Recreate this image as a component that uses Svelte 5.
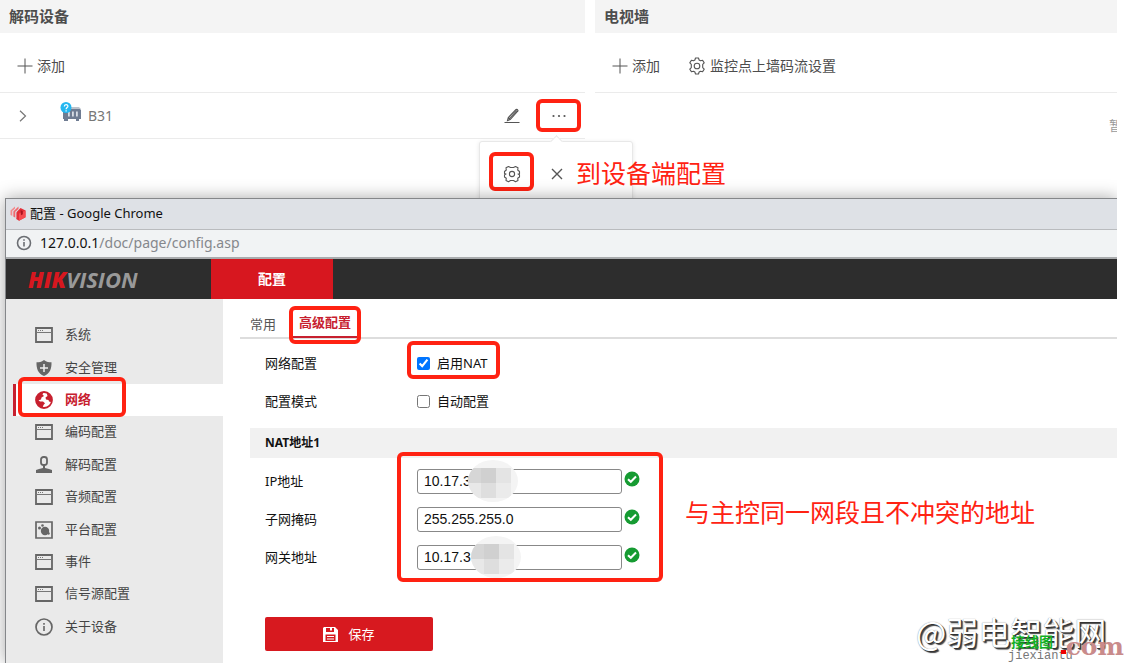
<script>
  const menu = [
    { label: '系统', icon: 'window' },
    { label: '安全管理', icon: 'shield' },
    { label: '网络', icon: 'globe', active: true },
    { label: '编码配置', icon: 'window' },
    { label: '解码配置', icon: 'decoder' },
    { label: '音频配置', icon: 'window' },
    { label: '平台配置', icon: 'platform' },
    { label: '事件', icon: 'window' },
    { label: '信号源配置', icon: 'window' },
    { label: '关于设备', icon: 'info' }
  ];
  const fields = [
    { id: 'ip', label: 'IP地址', value: '10.17.3', mask: 'first' },
    { id: 'netmask', label: '子网掩码', value: '255.255.255.0' },
    { id: 'gateway', label: '网关地址', value: '10.17.3', mask: 'second' }
  ];
  let nat = $state(true);
  let auto = $state(false);
</script>

{#snippet plus()}
  <svg width="16" height="16" viewBox="0 0 16 16" fill="none" stroke="#555"><path d="M8 .5v15M.5 8h15" /></svg>
{/snippet}

{#snippet gear()}
  <svg width="18" height="18" viewBox="0 0 18 18" fill="none" stroke="#555" stroke-width="1.1" stroke-linejoin="round">
    <path d="M7.500 1h3l.6 2 1.400.8 2.100-.6 1.600 2.700-1.500 1.500v3.200l1.500 1.500-1.600 2.700-2.100-.6-1.400.8-.6 2h-3l-.6-2-1.400-.8-2.100.6-1.600-2.700 1.500-1.500V7.400L1.800 5.900l1.600-2.700 2.100.6L6.900 3z" />
    <circle cx="9" cy="9" r="2.800" />
  </svg>
{/snippet}

<div class="page">
  <div class="panels">
    <section>
      <h2>解码设备</h2>
      <div class="toolbar"><button class="tool">{@render plus()}添加</button></div>
      <div class="device">
        <button class="expand" aria-label="B31">
          <svg width="8" height="12" viewBox="0 0 8 12" fill="none" stroke="#777" stroke-width="1.200"><path d="M1 .8 6.500 6 1 11.200" /></svg>
        </button>
        <svg class="unit" width="22" height="20" viewBox="0 0 22 20">
          <path d="M8 7 11 5h8l2 2z" fill="#bcc3cc" />
          <path d="M3 8h4l2-1h11l1 1v9h-2v2h-3v-2H8v2H4v-2H3z" fill="#6f7c92" />
          <path d="M8 9.500h1.800v5H8zM12 9.500h1.800v5H12zM16 9.500h1.800v5H16z" fill="#d8dde5" />
          <circle cx="6" cy="5.500" r="5.500" fill="#25b7f0" />
          <path d="M4.300 4.400C4.300 2 7.900 2 7.900 4.200 7.900 5.500 6.100 5.600 6.100 7.200M6.100 8.200v1.200" fill="none" stroke="#fff" stroke-width="1.200" />
        </svg>
        <span class="name">B31</span>
        <button class="icon" aria-label="编辑">
          <svg width="16" height="16" viewBox="0 0 16 16" fill="none" stroke="#555" stroke-width="1.100"><path d="M3.500 12.500 4.300 9.600 12 1.500Q13.200 1 14 2.400 14 3 13.500 3.500L6.200 11.500zM4.500 9.800l1.700 1.700M5.500 10.500 12.800 2.500M.5 14.500h15" /></svg>
        </button>
        <div class="more marked">
          <button class="icon" aria-label="更多">
            <svg width="14" height="4" viewBox="0 0 14 4" fill="#555"><circle cx="1.500" cy="2" r="1.100" /><circle cx="7" cy="2" r="1.100" /><circle cx="12.500" cy="2" r="1.100" /></svg>
          </button>
          <div class="popover">
            <div class="setting marked">
              <button class="icon" aria-label="配置">
                <svg width="18" height="18" viewBox="0 0 18 18" fill="none" stroke="#555" stroke-width="1.100" stroke-linejoin="round">
                  <path d="M5.500 1.500 7.500 2.500h3l2-1 2.500 1.300-.3 2.200 1.800 1.500v2.200L15 9l1.500.8v2.200l-1.800 1.300.3 2.200-2.500 1.200-2-1.200h-3l-2 1.200L3 15.500l.3-2.200L1.500 12V9.800L3 9l-1.500-.5V6.500L3.300 5 3 2.800z" />
                  <circle cx="9" cy="9" r="2.600" />
                </svg>
              </button>
            </div>
            <button class="icon" aria-label="删除">
              <svg width="12" height="12" viewBox="0 0 12 12" fill="none" stroke="#555" stroke-width="1.400"><path d="m1 1 10 10M11 1 1 11" /></svg>
            </button>
            <p class="note">到设备端配置</p>
          </div>
        </div>
      </div>
    </section>

    <section>
      <h2>电视墙</h2>
      <div class="toolbar">
        <button class="tool">{@render plus()}添加</button>
        <button class="tool">{@render gear()}监控点上墙码流设置</button>
      </div>
      <div class="empty"><span>暂</span></div>
    </section>
  </div>

  <div class="browser">
    <div class="titlebar">
      <svg width="16" height="16" viewBox="0 0 16 16">
        <path d="M.5 5.500 5 1.500v2L2.500 6v5L.5 10z" fill="#f4898c" />
        <path d="M3.200 6.500 8.500 1.500v2.300L5.500 6.800v6L3.200 11.500z" fill="#f0686d" />
        <path d="M6.200 7.500 10.500 3 15.500 5.500v6.800L9 15.800 6.200 14z" fill="#e42d36" />
        <path d="M9 8.500 15.500 5.500v6.800L9 15.800z" fill="#f64b50" /><path d="M10.500 5 12.800 6.300v3l-1.800 1z" fill="#a9131e" />
        <path d="M2.800 5.500v6M5.900 6.500v7" stroke="#dee1e6" stroke-width=".7" />
      </svg>
      <span>配置 - Google Chrome</span>
    </div>
    <div class="address">
      <svg width="16" height="16" viewBox="0 0 16 16" fill="none" stroke="#6b6e73" stroke-width="1.600"><circle cx="8" cy="8" r="6.500" /><path d="M8 7v4.500M8 4.300v1.500" /></svg>
      <span>127.0.0.1<i>/doc/page/config.asp</i></span>
    </div>
    <header>
      <div class="logo"><b>HIK</b>VISION</div>
      <a class="nav" href="#config">配置</a>
    </header>

    <div class="body">
      <nav>
        {#each menu as item}
          <a href="#{item.icon}" class:active={item.active}>
            <svg width="18" height="18" viewBox="0 0 18 18">
              {#if item.icon === 'window'}
                <path d="M1 2h16v14H1z" fill="none" stroke="#666" stroke-width="1.800" />
                <path d="M1 6.500h16" stroke="#777" />
                <path d="M3 4.500h6" stroke="#777" stroke-dasharray="1 1" />
              {:else if item.icon === 'shield'}
                <path d="M9 1c2.500 2 5 2.300 7.500 2.300C16.700 10 15 14.500 9 17 3 14.500 1.300 10 1.500 3.300 4 3.300 6.500 3 9 1z" fill="#666" />
                <path d="M9 5v8M5 9h8" stroke="#eee" stroke-width="1.500" />
              {:else if item.icon === 'globe'}
                <circle cx="9" cy="9" r="8" fill="#fff" stroke="#c7202f" stroke-width="1.800" />
                <path d="M1.200 9C1.200 4.500 4.500 1.300 8.500 1.200L7.500 3.500 9 5 6.500 6.500 6 8.500 3.500 9.200 5 10.500H8L10 12.200 8.500 14 7.500 17C4 16.500 1.200 13 1.200 9zM11.500 1.500 15 4 17 8.500 16 11 14 10.500 13.500 9 11 8.500 10.500 6.500 12.500 5z" fill="#c7202f" />
              {:else if item.icon === 'decoder'}
                <rect x="6" y="1" width="6" height="8" rx="2.500" fill="none" stroke="#666" stroke-width="1.800" />
                <path d="M8 9h2v3l4 1H4l4-1zM1 14l3-1h10l3 1v3H1z" fill="#666" />
              {:else if item.icon === 'platform'}
                <path d="M1 1h16v16H1z" fill="none" stroke="#666" stroke-width="1.700" />
                <circle cx="10" cy="10" r="4.200" fill="#666" /><circle cx="4.500" cy="7" r="1.500" fill="#666" /><circle cx="7.500" cy="4.500" r="1.300" fill="#666" /><path d="m11 12 3 2 1-2-3-2z" fill="#666" />
              {:else}
                <circle cx="9" cy="9" r="8" fill="none" stroke="#666" stroke-width="1.700" />
                <path d="M9 8v5M9 5v1.700" stroke="#666" stroke-width="1.600" />
              {/if}
            </svg>
            <span>{item.label}</span>
            {#if item.active}<span class="outline"></span>{/if}
          </a>
        {/each}
      </nav>

      <main>
        <div class="tabs">
          <a href="#common">常用</a>
          <a href="#advanced" class="current">高级配置</a>
        </div>
        <div class="form">
          <div class="row">
            <span>网络配置</span>
            <label class="check nat"><input type="checkbox" bind:checked={nat} />启用NAT</label>
          </div>
          <div class="row">
            <span>配置模式</span>
            <label class="check"><input type="checkbox" bind:checked={auto} />自动配置</label>
          </div>
          <h3>NAT地址1</h3>
          <div class="group">
            {#each fields as f}
              <div class="row">
                <label for={f.id}>{f.label}</label>
                <div class="field">
                  <input id={f.id} type="text" value={f.value} />
                  {#if f.mask}
                    <svg class="mask {f.mask}" width="50" height="42" viewBox="0 0 50 42">
                      <defs><clipPath id="c-{f.id}"><ellipse cx="25" cy="21" rx="25" ry="21" /></clipPath></defs>
                      <g clip-path="url(#c-{f.id})">
                        <path d="M0 0h50v42H0z" fill="#f4f4f4" />
                        <path d="M0 8h13v15H0z" fill="#d6d6d6" /><path d="M13 8h15v15H13z" fill="#d0d0d0" /><path d="M28 8h15v15H28z" fill="#e4e4e4" />
                        <path d="M0 23h13v15H0z" fill="#e8e8e8" /><path d="M13 23h15v15H13z" fill="#dedede" /><path d="M28 23h15v15H28z" fill="#ebebeb" />
                      </g>
                    </svg>
                  {/if}
                  <svg width="16" height="16" viewBox="0 0 16 16"><circle cx="8" cy="8" r="7.500" fill="#169b32" /><path d="m4 8.200 2.800 2.600L12 5.500" fill="none" stroke="#fff" stroke-width="2" /></svg>
                </div>
              </div>
            {/each}
            <p class="note">与主控同一网段且不冲突的地址</p>
          </div>
          <button class="save">
            <svg width="15" height="15" viewBox="0 0 15 15"><path fill-rule="evenodd" d="M1 0h11l3 3v12H0V1zM3 1v4h8V1H9v2.500H7V1zM2.500 7.500V14h10V7.500zM4 9h7v1H4zM4 11.500h7v1H4z" fill="#fff" /></svg>
            保存
          </button>
        </div>
      </main>
    </div>
  </div>

  <div class="watermark">
    <span class="handle">@弱电智能网</span>
    <span class="site"><b>接线图</b><small>jiexiantu</small></span>
    <span class="com"><i></i>com</span>
  </div>
</div>

<style>
  :global(body) { background: #fff; }
  .page {
    --mark: #ff2212;
    position: relative;
    box-sizing: border-box;
    display: flex;
    flex-direction: column;
    min-height: 100vh;
    padding-right: 7px;
    overflow: hidden;
    color: #4d4d4d;
    font: 14px/20px "Noto Sans", "Noto Sans CJK SC", sans-serif;
  }
  button { padding: 0; border: 0; background: none; font: inherit; color: inherit; display: flex; align-items: center; justify-content: center; }
  a { color: inherit; text-decoration: none; }
  svg { flex: none; display: block; }
  p, h2, h3 { margin: 0; }

  .panels { display: grid; grid-template-columns: 585fr 522fr; gap: 10px; padding-bottom: 59px; }
  h2 { padding: 6px 10px 7px 9px; background: #f4f4f4; font-size: 15px; line-height: 20px; font-weight: 700; }
  .toolbar { display: flex; gap: 28px; padding: 23px 17px 16px; border-bottom: 1px solid #ebebeb; }
  .tool { gap: 4px; }
  .device { display: flex; align-items: center; height: 45px; padding: 0 4px 0 19px; border-bottom: 1px solid #ebebeb; }
  .expand { width: 8px; height: 20px; }
  .unit { margin: 0 6px 8px 33px; }
  .name { flex: 1; color: #777; }
  .more { position: relative; margin-left: 16px; width: 45px; height: 33px; display: grid; place-content: center; }
  .marked::after, .outline, .current::after, .nat::after, .group::after {
    content: "";
    position: absolute;
    box-sizing: border-box;
    inset: 0;
    border: 4px solid var(--mark);
    border-radius: 6px;
    pointer-events: none;
  }
  .popover {
    position: absolute;
    top: 42px;
    left: -57px;
    box-sizing: border-box;
    display: flex;
    align-items: center;
    width: 154px;
    height: 66px;
    padding: 0 0 5px 9px;
    background: #fff;
    border: 1px solid #e8e8e8;
    border-radius: 3px;
    box-shadow: 0 1px 4px rgba(0, 0, 0, .1);
  }
  .popover::before {
    content: "";
    position: absolute;
    top: -5px;
    left: 72px;
    width: 8px;
    height: 8px;
    background: #fff;
    border: solid #e8e8e8;
    border-width: 1px 0 0 1px;
    transform: rotate(45deg);
  }
  .setting { position: relative; flex: none; display: grid; place-content: center; width: 45px; height: 39px; margin-right: 17px; }
  .popover .icon { padding-top: 4px; }
  .note { flex: none; color: var(--mark); font-size: 25px; line-height: 32px; white-space: nowrap; font-family: "Noto Sans CJK SC", sans-serif; font-weight: 400; }
  .popover .note { margin-left: 13px; }
  .empty { overflow: hidden; padding-top: 22px; text-align: right; color: #999; font-size: 13px; }
  .empty span { margin-right: -5px; }

  .browser {
    position: relative;
    flex: 1;
    display: flex;
    flex-direction: column;
    margin-left: 5px;
    border: solid #85878a;
    border-width: 1px 0 0 1px;
    box-shadow: 0 0 16px rgba(0, 0, 0, .35);
    clip-path: inset(-20px 0 0 -5px);
    background: #fff;
    color: #111;
    font-size: 13px;
  }
  .titlebar { display: flex; align-items: center; gap: 4px; padding: 4px 4px 6px; background: #dee1e6; border-bottom: 1px solid #b9bbbe; font-size: 13px; }
  .address { display: flex; align-items: center; gap: 8px; padding: 3px 10px 4px; background: #f1f3f4; border-bottom: 2px solid #a9abad; font-size: 14px; }
  .address i { color: #85888c; font-style: normal; }
  header { display: flex; background: #2d2d2d; }
  .logo { box-sizing: border-box; width: 205px; padding-left: 22px; color: #999; font: italic 700 22px/40px "Open Sans", sans-serif; }
  .logo b { color: #d7171f; }
  .nav { width: 122px; background: #d7171f; color: #fff; font-size: 14px; line-height: 40px; font-weight: 700; text-align: center; }

  .body { flex: 1; display: flex; }
  nav { flex: none; box-sizing: border-box; width: 217px; padding: 20px 0; background: #eaeaea; color: #444; display: grid; grid-template-rows: repeat(10, 1fr); }
  nav a { position: relative; display: flex; align-items: center; gap: 12px; margin-left: 7px; padding-left: 22px; }
  nav a > span { padding-bottom: 2px; }
  nav .active { padding-left: 19px; border-left: 3px solid #c7202f; background: #fff; color: #c7202f; font-weight: 700; }
  nav .outline { inset: -7px auto -1px 2px; width: 108px; padding: 0; }

  main { flex: 1; min-width: 0; padding-left: 17px; }
  .tabs { display: flex; align-items: center; gap: 22px; height: 40px; padding: 0 10px; border-bottom: 2px solid #ddd; box-sizing: border-box; color: #555; }
  .tabs a { padding-top: 12px; }
  .tabs .current { position: relative; padding: 8px 10px 2px; margin: 4px 0 0 -9px; border-bottom: 2px solid #c7202f; color: #c7202f; font-weight: 700; line-height: 24px; }
  .tabs .current::after { inset: 4px 0 -8px 0; }
  .form { padding: 5px 0 12px 10px; }
  .row { display: flex; align-items: center; height: 38px; padding-left: 15px; }
  .row > :first-child { width: 152px; }
  .check { position: relative; display: flex; align-items: center; gap: 7px; }
  .check input { width: 13px; height: 13px; margin: 0; }
  .nat::after { inset: -12px auto -6px -10px; width: 93px; }
  h3 { margin: 8px 0 4px; padding: 5px 15px; background: #f1f1f1; font-size: 12px; line-height: 20px; font-weight: 700; }
  .group { position: relative; }
  .group::after { inset: -10px auto -6px 147px; width: 266px; }
  .field { display: flex; align-items: center; gap: 2px; position: relative; }
  .field input { box-sizing: border-box; width: 205px; height: 25px; padding: 0 6px; border: 1px solid #888; border-radius: 3px; background: #fff; color: #111; font: 14px/20px "Liberation Sans", sans-serif; }
  .field > svg:last-child { margin-bottom: 4px; }
  .mask { position: absolute; top: -9px; left: 51px; }
  .mask.second { left: 54px; }
  .group .note { position: absolute; top: 33px; left: 435px; }
  .save { gap: 10px; width: 168px; height: 34px; margin: 41px 0 0 15px; background: #d7191f; border-radius: 2px; color: #fff; }

  .watermark { position: absolute; right: 0; bottom: 0; width: 208px; height: 52px; white-space: nowrap; }
  .watermark > * { position: absolute; }
  .handle { top: 0; left: 0; color: #fff; font: 32px/40px "Noto Sans CJK SC", sans-serif; text-shadow: 1px 1px 0 #333, 2px 2px 1px #444, 0 0 1px #777; }
  .site { top: 23px; left: 92px; display: flex; flex-direction: column; }
  .site b { padding-left: 3px; color: #12b024; font-size: 14px; line-height: 16px; }
  .site small { color: #777; font: 12px/12px "Liberation Mono", monospace; }
  .com { right: 0; bottom: 1px; display: flex; align-items: end; color: #c98b8b; font: 700 25px/30px "DejaVu Serif", serif; }
  .com i { width: 5px; height: 4px; margin-bottom: 8px; background: #e00; }
</style>
